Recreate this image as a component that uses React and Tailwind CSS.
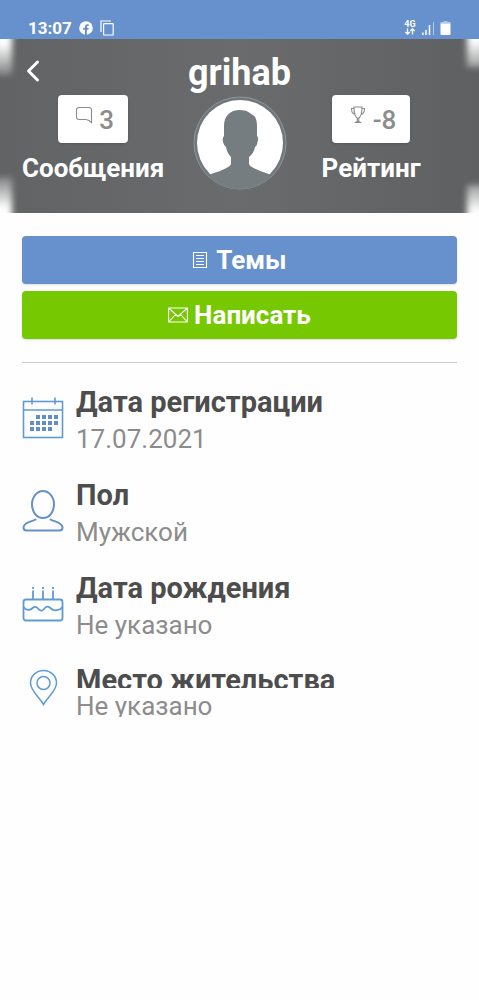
import React from 'react';

const CalendarIcon = () => (
  <svg viewBox="0 0 42 42" className="w-[42px] h-[42px]" fill="none" stroke="#5f9bd3" strokeWidth="1.6">
    <rect x="1.5" y="4.5" width="39" height="36" />
    <path d="M1.5 13H40.5" />
    <path d="M10 0.5V7.5M33 0.5V7.5" />
    <g fill="#5f8fcb" stroke="none">
      {[14, 20, 26, 32].map((x) => <rect key={x} x={x} y="18" width="4" height="4" />)}
      {[8, 14, 20, 26, 32].map((x) => <rect key={x} x={x} y="24" width="4" height="4" />)}
      {[8, 14, 20, 26].map((x) => <rect key={x} x={x} y="30" width="4" height="4" />)}
    </g>
  </svg>
);

const UserIcon = () => (
  <svg viewBox="0 0 42 42" className="w-[42px] h-[42px]" fill="none" stroke="#6690cb" strokeWidth="2" strokeLinecap="round">
    <ellipse cx="21" cy="14.5" rx="11" ry="13.5" />
    <path d="M13.5 29.5C11 31.500 1.500 32 1.500 37.500Q1.500 40.500 4.500 40.500H37.500Q40.500 40.500 40.500 37.500C40.500 32 31 31.500 28.500 29.500" />
  </svg>
);

const CakeIcon = () => (
  <svg viewBox="0 0 42 42" className="w-[42px] h-[42px]" fill="none" stroke="#5f9bd3" strokeWidth="1.8">
    <rect x="1.500" y="16.500" width="39" height="21" rx="2.500" />
    <path d="M1.500 24C4 27.500 8 27.500 10 25.500S14 23 16 25.500S20 28.500 22 26S26 22.500 29 25.500S38 27.500 40.500 24" />
    <path d="M11 7.500V16M21 7.500V16M31 7.500V16M11 4V6M21 4V6M31 4V6" />
  </svg>
);

const PinIcon = () => (
  <svg viewBox="0 0 42 42" className="w-[42px] h-[42px]" fill="none" stroke="#5f9bd3" strokeWidth="1.5">
    <path d="M21.500 35.500C17 28 8.500 21.500 8.500 14A13 12.500 0 0 1 34.500 14C34.500 21.500 26 28 21.500 35.500Z" />
    <circle cx="21.500" cy="14" r="6.500" />
  </svg>
);

const fields = [
  { label: 'Дата регистрации', value: '17.07.2021', icon: CalendarIcon },
  { label: 'Пол', value: 'Мужской', icon: UserIcon },
  { label: 'Дата рождения', value: 'Не указано', icon: CakeIcon },
];

function StatusBar() {
  return (
    <div className="h-[39px] px-7 pt-4 flex items-center justify-between bg-[#6791cc] text-white">
      <div className="flex items-center gap-[7px]">
        <span className="text-[17px] leading-6 font-bold">13:07</span>
        <svg viewBox="0 0 14 14" className="w-[14px] h-[14px]">
          <circle cx="7" cy="7" r="6.800" fill="white" />
          <path d="M6 14V8.800H4.200V6.800H6V5.500Q6 3.200 8.300 3.200H9.700V5H8.600Q7.900 5 7.900 5.800V6.800H9.700L9.400 8.800H7.900V14Z" fill="#6791cc" />
        </svg>
        <svg viewBox="0 0 14 16" className="w-[14px] h-4" fill="none" stroke="white" strokeWidth="1.200">
          <path d="M1 12V1H11" />
          <rect x="3.600" y="3.600" width="9.600" height="11.400" rx="0.600" />
        </svg>
      </div>
      <div className="flex items-center gap-[5px]">
        <div className="w-3 flex flex-col items-center">
          <span className="text-[9px] leading-2 font-bold">4G</span>
          <svg viewBox="0 0 12 7" className="w-3 h-[7px]" fill="none" stroke="white" strokeWidth="1.300">
            <path d="M3.500 0.500V6M1.300 4L3.500 6.200L5.700 4M8.500 6.500V1M6.300 3L8.500 0.800L10.700 3" />
          </svg>
        </div>
        <svg viewBox="0 0 14 14" className="w-[14px] h-[14px]" fill="none" stroke="white">
          <path d="M1.800 14V11.500M5 14V9M8.500 14V4" strokeWidth="1.500" />
          <path d="M12.500 14V1" strokeWidth="1" strokeOpacity="0.500" />
        </svg>
        <svg viewBox="0 0 11 14" className="w-[11px] h-[14px]" fill="white">
          <path d="M3.500 0H7.500V1H10.500V2.500H0.500V1H3.500Z" opacity="0.500" />
          <path d="M0.500 2.500H10.500V13Q10.500 14 9.500 14H1.500Q0.500 14 0.500 13Z" />
        </svg>
      </div>
    </div>
  );
}

function Avatar() {
  return (
    <svg viewBox="0 0 94 94" className="w-[94px] h-[94px] mt-px" role="img" aria-label="grihab">
      <defs>
        <clipPath id="avatar">
          <circle cx="47" cy="47" r="46" />
        </clipPath>
      </defs>
      <circle cx="47" cy="47" r="46" fill="#70777b" stroke="#90979b" />
      <circle cx="47" cy="47" r="43" fill="white" />
      <g clipPath="url(#avatar)" fill="#757d81">
        <path d="M47 14C54 14 57 17 59 18.500C63 20 64 25 64 30V40Q66 42 64.500 46Q64 50 62 51Q61 57 56 61V68Q57 72 76 78L79 94H15L18 78Q37 72 38 68V61Q34 57 33 51Q31 50 30 46Q29 42 31 40V30C31 20 37 14 47 14Z" />
      </g>
    </svg>
  );
}

function Stat({ icon, value, label }) {
  return (
    <div className="flex flex-col items-center">
      <button className="h-12 px-[14px] flex items-center bg-white rounded text-[#8c8c8c] shadow-sm">
        {icon}
        <span className="pt-[2px] ml-[3px] text-[26px] leading-9 font-medium">{value}</span>
      </button>
      <span className="mt-[7px] text-[26px] leading-9 font-bold text-white">{label}</span>
    </div>
  );
}

function Header() {
  return (
    <header className="relative h-[174px] px-[22px] overflow-hidden bg-linear-to-r from-[#616364] via-[#696b6c] to-[#5e6061]">
      <div className="absolute -left-4 -top-4 w-7 h-13 bg-linear-to-b from-white from-40% to-white/20 blur-[3px]" />
      <div className="absolute -left-4 -bottom-4 w-7 h-13 bg-linear-to-t from-white from-40% to-white/20 blur-[3px]" />
      <div className="absolute -right-4 -top-4 w-7 h-11 bg-linear-to-b from-white from-40% to-white/40 blur-[3px]" />
      <div className="absolute -right-4 -bottom-4 w-7 h-11 bg-linear-to-t from-white from-40% to-white/40 blur-[3px]" />
      <div className="h-14 grid grid-cols-[1fr_auto_1fr] items-center">
        <button aria-label="Назад" className="w-6 h-8 mt-2 flex items-center">
          <svg viewBox="0 0 24 24" className="w-6 h-6" fill="none" stroke="white" strokeWidth="3" strokeLinecap="round" strokeLinejoin="round">
            <path d="M15.500 3L6.500 12L15.500 21" />
          </svg>
        </button>
        <h1 className="mt-3 text-4xl leading-11 font-bold text-white">grihab</h1>
      </div>
      <div className="grid grid-cols-[142fr_151fr_112fr_30fr] justify-items-center">
        <Stat
          value="3"
          label="Сообщения"
          icon={
            <svg viewBox="0 0 24 24" className="w-6 h-6 -mt-2" fill="none" stroke="currentColor" strokeWidth="1.100">
              <path d="M7 4.500H17Q19.500 4.500 19.500 7V19.500Q17 17 14 16.500H7Q4.500 16.500 4.500 14V7Q4.500 4.500 7 4.500Z" />
            </svg>
          }
        />
        <Avatar />
        <Stat
          value="-8"
          label="Рейтинг"
          icon={
            <svg viewBox="0 0 24 24" className="w-6 h-6 -mt-2" fill="none" stroke="currentColor" strokeWidth="1.100">
              <path d="M8 4H16C16 10 15 14.500 12 15.500C9 14.500 8 10 8 4ZM8 5.500H5.500C5.500 9 7 11 9 11.500M16 5.500H18.500C18.500 9 17 11 15 11.500M11.300 15.500V18.500M12.700 15.500V18.500M9.500 19.500Q12 17.500 14.500 19.500Z" />
            </svg>
          }
        />
      </div>
    </header>
  );
}

export default function App() {
  return (
    <div className="min-h-screen bg-[#fefefe] font-[Roboto,sans-serif]">
      <StatusBar />
      <Header />
      <main className="px-[22px] pt-[23px]">
        <div className="flex flex-col gap-[7px]">
          <button className="h-12 flex items-center justify-center gap-2 rounded bg-[#6791cc] text-white text-[26px] font-bold shadow-sm">
            <svg viewBox="0 0 16 18" className="w-4 h-[18px]" fill="none" stroke="white" strokeWidth="1.100">
              <path d="M1.500 1.500H14.500V16.500H1.500ZM4 4.500H12M4 7.500H12M4 10.500H12M4 13.500H12" />
            </svg>
            Темы
          </button>
          <button className="h-12 flex items-center justify-center gap-[6px] rounded bg-[#76c800] text-white text-[26px] font-bold shadow-sm">
            <svg viewBox="0 0 20 16" className="w-5 h-4" fill="none" stroke="white" strokeWidth="1.100">
              <path d="M0.600 1H19.400V15H0.600ZM0.600 1L10 9.500L19.400 1M0.600 15L7.500 7.500M19.400 15L12.500 7.500" />
            </svg>
            Написать
          </button>
        </div>
        <hr className="mt-[23px] border-[#cccccc]" />
        <dl className="pt-5">
          {fields.map(({ label, value, icon: Icon }) => (
            <div key={label} className="h-[93px] flex gap-3">
              <div className="pt-[14px]">
                <Icon />
              </div>
              <div>
                <dt className="text-[29px] leading-[38px] font-bold text-[#4d4d4d]">{label}</dt>
                <dd className="text-[26px] leading-9 text-[#8c8c8c]">{value}</dd>
              </div>
            </div>
          ))}
          <div className="flex gap-3">
            <div className="pt-[7px]">
              <PinIcon />
            </div>
            <div>
              <dt className="h-[26px] overflow-hidden text-[29px] leading-9 font-bold text-[#4d4d4d]">Место жительства</dt>
              <dd className="h-[29px] overflow-hidden text-[26px] leading-9 text-[#8c8c8c]">Не указано</dd>
            </div>
          </div>
        </dl>
      </main>
    </div>
  );
}
